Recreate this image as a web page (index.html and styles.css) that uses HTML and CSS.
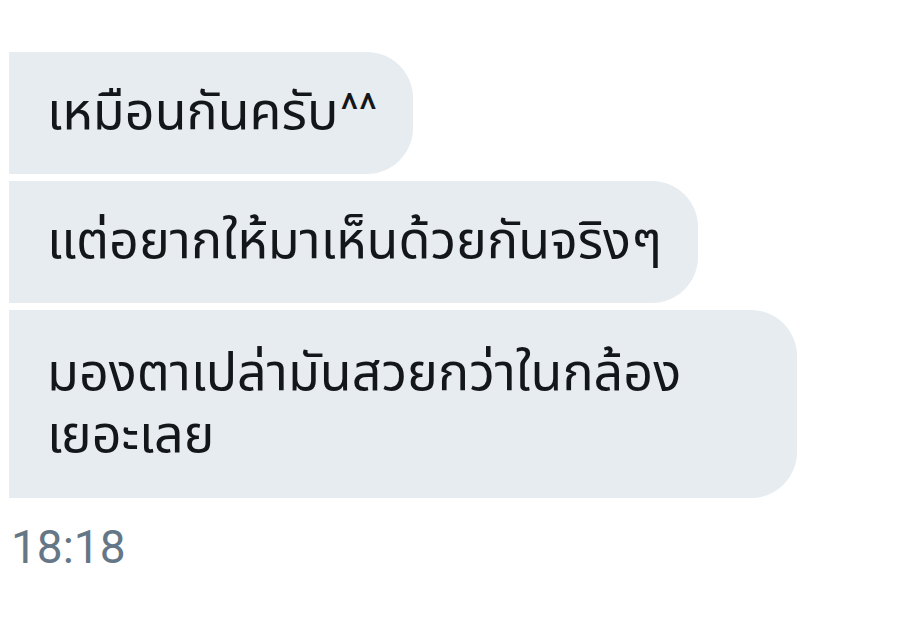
FILE: index.html
```html
<!DOCTYPE html>
<html lang="th">
<head>
<meta charset="utf-8">
<link rel="stylesheet" href="styles.css">
</head>
<body>
<div class="thread">
  <div class="bubble">เหมือนกันครับ<span class="caret">^^</span></div>
  <div class="bubble">แต่อยากให้มาเห็นด้วยกันจริงๆ</div>
  <div class="bubble wide">มองตาเปล่ามันสวยกว่าในกล้อง<br>เยอะเลย</div>
  <div class="time">18:18</div>
</div>
</body>
</html>
```
FILE: styles.css
```css
html, body {
  margin: 0;
  padding: 0;
  background: #ffffff;
}
.thread {
  display: flex;
  flex-direction: column;
  align-items: flex-start;
  gap: 7px;
  padding: 52px 0 0 9px;
}
.bubble {
  background: #e6ecf0;
  color: #14171a;
  font-family: "Noto Sans Thai", "Roboto", sans-serif;
  font-size: 52px;
  line-height: 62px;
  padding: 30px 36px 30px 38px;
  border-radius: 0 46px 46px 0;
}
.caret {
  font-family: "Roboto", sans-serif;
  font-size: 44px;
  line-height: 0;
  vertical-align: 4px;
  padding-left: 2px;
}
.wide {
  box-sizing: border-box;
  width: 788px;
  padding-top: 33px;
  padding-bottom: 31px;
}
.time {
  font-family: "Roboto", sans-serif;
  color: #657786;
  font-size: 46px;
  line-height: 60px;
  margin-top: 12px;
  padding-left: 2px;
}
```
